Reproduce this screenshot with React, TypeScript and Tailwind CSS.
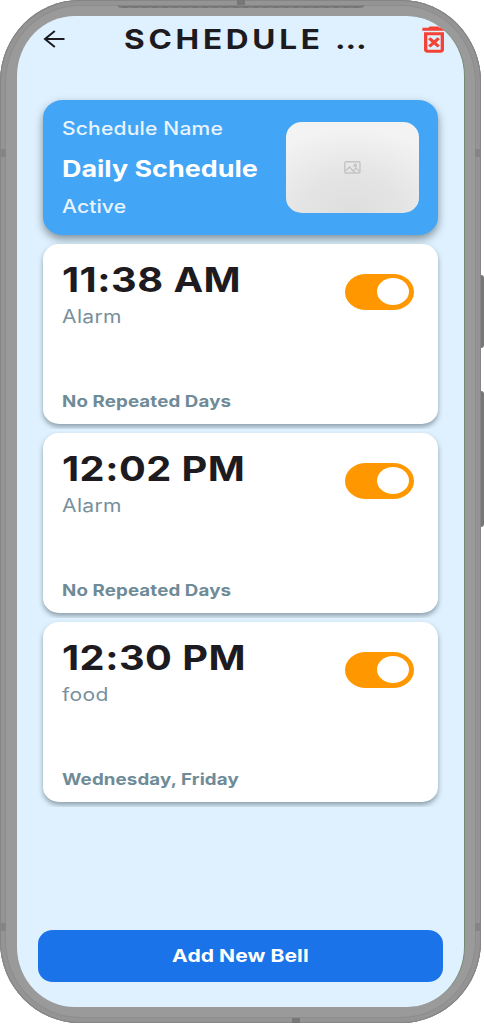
import React from "react";
import { MdOutlineDeleteForever } from "react-icons/md";

const bells = [
  { id: 1, time: "11:38 AM", label: "Alarm", days: "No Repeated Days" },
  { id: 2, time: "12:02 PM", label: "Alarm", days: "No Repeated Days" },
  { id: 3, time: "12:30 PM", label: "food", days: "Wednesday, Friday" },
];

const BellCard: React.FC<{ bell: (typeof bells)[number] }> = ({ bell }) => {
  return (
    <div className="flex h-[189px] shrink-0 items-start overflow-hidden px-[5px] pt-1">
      <div className="flex h-[180px] w-full items-start justify-between rounded-[16px/15px] bg-white pl-[19px] pr-[24px] shadow-[0_3px_5px_rgba(60,80,90,0.5)]">
        <div className="flex h-full flex-col whitespace-nowrap">
          <p className="mt-[16px] h-[40px] origin-left scale-x-[1.17] text-[34px] leading-[40px] font-bold tracking-[0.4px] text-[#1d1b20]">{bell.time}</p>
          <p className="mt-[5px] h-[24px] origin-left scale-x-[1.17] text-[18px] leading-[24px] tracking-[0.3px] text-[#78909c]">{bell.label}</p>
          <p className="mt-[62px] h-[20px] origin-left scale-x-[1.17] text-[16px] leading-[20px] font-bold tracking-[0.1px] text-[#6f8b97]">{bell.days}</p>
        </div>
        <div className="mt-[30px] flex h-[36px] w-[69px] items-center justify-end rounded-[21px/18px] bg-[#ff9800] pr-[5px]">
          <div className="h-[27px] w-[32px] rounded-[50%] bg-white" />
        </div>
      </div>
    </div>
  );
};

const App: React.FC = () => {
  return (
    <div className="relative h-[1024px] w-[484px] overflow-hidden bg-white font-['Inter',sans-serif]">
      {/* side buttons */}
      <div className="absolute top-[275px] left-[478px] h-[73px] w-[6px] rounded-r-[3px] bg-[#777777]" />
      <div className="absolute top-[391px] left-[478px] h-[136px] w-[6px] rounded-r-[3px] bg-[#777777]" />

      <div className="relative h-[1023px] w-[481px] rounded-[80px/82px] bg-[#9a9a9a] pt-[16px] pr-[16px] pb-[16px] pl-[17px] shadow-[inset_0_0_0_1px_#858585,inset_0_0_0_5px_#949494,inset_0_0_0_6px_#8d8d8d]">
        {/* antenna bands and speaker */}
        <div className="absolute top-[149px] left-0 h-[8px] w-[6px] bg-[#858585]" />
        <div className="absolute top-[149px] right-0 h-[8px] w-[6px] bg-[#858585]" />
        <div className="absolute top-[923px] left-0 h-[8px] w-[6px] bg-[#858585]" />
        <div className="absolute top-[923px] right-0 h-[8px] w-[6px] bg-[#858585]" />
        <div className="absolute top-0 left-[237px] h-[5px] w-[8px] bg-[#777777]" />
        <div className="absolute bottom-0 left-[292px] h-[5px] w-[8px] bg-[#777777]" />
        <div className="absolute top-[5px] left-[118px] h-[3px] w-[246px] rounded-b-[3px] border-b-2 border-dashed border-[#757575] bg-[#858585]" />

        <div className="flex h-full w-full flex-col overflow-hidden rounded-[58px/60px] border-r border-[#728b70] bg-[#dff1fe]">
          <header className="flex h-[46px] shrink-0 items-center justify-between pl-[26px] pr-[10px]">
            <svg className="h-[20px] w-[22px]" viewBox="0 0 22 20" fill="none" stroke="#1d1b20" strokeWidth="2">
              <path d="M21.5 10H1.8M11.8 2L2 10L11.8 18" />
            </svg>
            <h1 className="mt-[3px] ml-[12px] w-[244px] whitespace-nowrap">
              <span className="inline-block origin-left scale-x-[1.17] text-[27px] font-bold tracking-[3.2px] text-[#1d1b20]">SCHEDULE …</span>
            </h1>
            <MdOutlineDeleteForever className="h-[35px] w-[40px] text-[#f44336]" preserveAspectRatio="none" />
          </header>

          <main className="flex grow flex-col px-[21px] pt-[37.5px]">
            <section className="mx-[5px] flex h-[135px] shrink-0 items-center justify-between rounded-[20px/18px] bg-[#42a5f5] pr-[19px] pl-[19px] shadow-[0_4px_8px_rgba(60,80,90,0.6)]">
              <div className="flex h-full flex-col whitespace-nowrap text-white">
                <p className="mt-[17px] origin-left scale-x-[1.17] text-[18px] leading-[24px] font-medium tracking-[0.15px] text-[#e8f4fe]">Schedule Name</p>
                <p className="mt-[13px] origin-left scale-x-[1.17] text-[23px] leading-[30px] font-bold">Daily Schedule</p>
                <p className="mt-[11px] origin-left scale-x-[1.17] text-[18px] leading-[24px] font-medium tracking-[0.1px] text-[#e8f4fe]">Active</p>
              </div>
              <div className="flex h-[91px] w-[133px] items-center justify-center rounded-[16px/15px] bg-[radial-gradient(ellipse_110px_85px_at_50%_100%,#dedede_0%,#e4e4e4_45%,#f3f3f3_100%)]">
                <svg className="h-[13px] w-[17px]" viewBox="0 0 17 13" fill="none" stroke="#c4c4c4" strokeWidth="1.4">
                  <rect x="0.8" y="0.8" width="15.2" height="11.2" rx="1.2" />
                  <path d="M1.5 10L5.5 6L11 12M9.5 9.5L12 7.2L15.8 10.8" />
                  <circle cx="11.3" cy="4.4" r="1.2" />
                </svg>
              </div>
            </section>

            <div className="mt-[5px] flex flex-col">
              {bells.map((bell) => (
                <BellCard key={bell.id} bell={bell} />
              ))}
            </div>

            <button className="mt-[123px] h-[52px] w-full shrink-0 rounded-[15px/14px] bg-[#1a73e8] text-white">
              <span className="inline-block scale-x-[1.17] text-[18px] font-bold tracking-[0.05px]">Add New Bell</span>
            </button>
          </main>
        </div>
      </div>
    </div>
  );
};

export default App;
